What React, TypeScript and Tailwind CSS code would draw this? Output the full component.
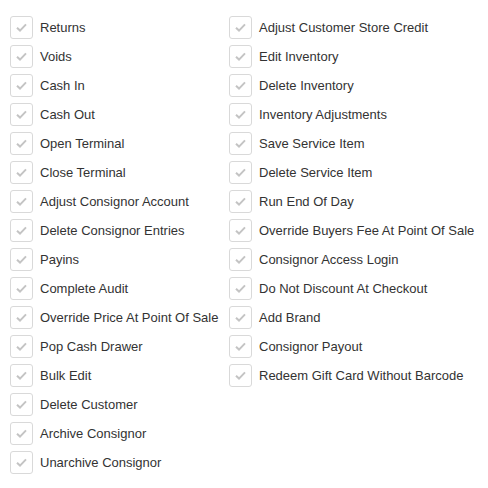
const leftItems = [
  "Returns",
  "Voids",
  "Cash In",
  "Cash Out",
  "Open Terminal",
  "Close Terminal",
  "Adjust Consignor Account",
  "Delete Consignor Entries",
  "Payins",
  "Complete Audit",
  "Override Price At Point Of Sale",
  "Pop Cash Drawer",
  "Bulk Edit",
  "Delete Customer",
  "Archive Consignor",
  "Unarchive Consignor",
];

const rightItems = [
  "Adjust Customer Store Credit",
  "Edit Inventory",
  "Delete Inventory",
  "Inventory Adjustments",
  "Save Service Item",
  "Delete Service Item",
  "Run End Of Day",
  "Override Buyers Fee At Point Of Sale",
  "Consignor Access Login",
  "Do Not Discount At Checkout",
  "Add Brand",
  "Consignor Payout",
  "Redeem Gift Card Without Barcode",
];

const CheckRow = ({ label }: { label: string }) => (
  <div className="flex items-center h-[23px]">
    <div className="w-[23px] h-[23px] shrink-0 rounded-[3px] border border-[#d9d9d9] bg-white flex items-center justify-center">
      <svg width="11" height="9" viewBox="0 0 11 9" fill="none">
        <path d="M1 4.8 L4 7.6 L10 1.4" stroke="#c4c4c4" strokeWidth="2" />
      </svg>
    </div>
    <span className="ml-[7px] text-[13px] leading-none text-[#333333] whitespace-nowrap">{label}</span>
  </div>
);

export default function App() {
  return (
    <div className="w-[488px] h-[488px] bg-white font-['Liberation_Sans',Arial,sans-serif] pt-[16px] pl-[10px] flex">
      <div className="w-[219px] flex flex-col gap-[6px]">
        {leftItems.map((item) => (
          <CheckRow key={item} label={item} />
        ))}
      </div>
      <div className="flex flex-col gap-[6px]">
        {rightItems.map((item) => (
          <CheckRow key={item} label={item} />
        ))}
      </div>
    </div>
  );
}
